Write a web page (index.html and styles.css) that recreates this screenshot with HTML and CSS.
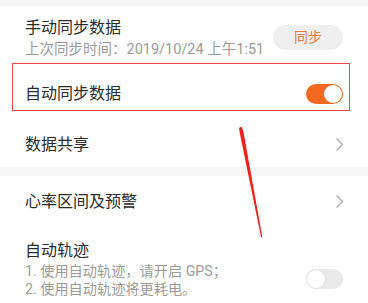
FILE: index.html
```html
<!DOCTYPE html>
<html lang="zh">
<head>
<meta charset="utf-8">
<link rel="stylesheet" href="styles.css">
</head>
<body>
<div class="page">
  <div class="band band-top"></div>
  <div class="row row-sync">
    <div class="text">
      <div class="title">手动同步数据</div>
      <div class="sub">上次同步时间：2019/10/24 上午1:51</div>
    </div>
    <div class="btn">同步</div>
  </div>
  <div class="row row-auto">
    <div class="title">自动同步数据</div>
    <div class="toggle on"><span class="knob"></span></div>
  </div>
  <div class="row row-share">
    <div class="title">数据共享</div>
    <svg class="chev" width="9" height="15" viewBox="0 0 9 15"><polyline points="1.5,1.5 7.5,7.5 1.5,13.5" fill="none" stroke="#b4b4b4" stroke-width="1.6"/></svg>
  </div>
  <div class="band band-gap"></div>
  <div class="row row-heart">
    <div class="title">心率区间及预警</div>
    <svg class="chev" width="9" height="15" viewBox="0 0 9 15"><polyline points="1.5,1.5 7.5,7.5 1.5,13.5" fill="none" stroke="#b4b4b4" stroke-width="1.6"/></svg>
  </div>
  <div class="row row-track">
    <div class="text">
      <div class="title">自动轨迹</div>
      <div class="line">1. 使用自动轨迹，请开启 GPS；</div>
      <div class="line">2. 使用自动轨迹将更耗电。</div>
    </div>
    <div class="toggle off"><span class="knob"></span></div>
  </div>

  <div class="mark-box"></div>
  <svg class="mark-arrow" width="368" height="303" viewBox="0 0 368 303">
    <polygon points="239,128 241.5,126.5 243.5,132 262.3,237 261,237 239.8,133" fill="#f0201a"/>
  </svg>
</div>
</body>
</html>
```

FILE: styles.css
```css
* { box-sizing: border-box; }
html, body { margin: 0; padding: 0; background: #ffffff; }
body {
  font-family: Roboto, "Noto Sans CJK SC", sans-serif;
  color: #2b2b2b;
}
.page {
  position: relative;
  width: 368px;
  height: 303px;
  overflow: hidden;
}
.band { background: #f5f5f5; }
.band-top { height: 6px; }
.band-gap { height: 9px; }

.row {
  display: flex;
  align-items: center;
  justify-content: space-between;
  padding: 0 25px;
}
.title {
  font-size: 16px;
  line-height: 22px;
  color: #2b2b2b;
}
.sub {
  font-size: 14.5px;
  line-height: 22px;
  color: #9a9a9a;
}
.line {
  font-size: 14.2px;
  line-height: 18px;
  color: #9a9a9a;
}

.row-sync {
  height: 58px;
  align-items: flex-start;
  padding-top: 11px;
}
.btn {
  margin-top: 8px;
  width: 70px;
  height: 25px;
  border-radius: 13px;
  background: #efefef;
  color: #ea7a3c;
  font-size: 14px;
  line-height: 25px;
  text-align: center;
}
.row-auto { height: 58px; padding-top: 2px; }
.row-share { height: 45px; }
.row-heart { height: 51px; }
.row-track {
  height: 76px;
  align-items: flex-start;
  padding-top: 13px;
}
.row-track .toggle { margin-top: 29px; }
.chev { margin-right: -1px; }

.toggle {
  position: relative;
  width: 37px;
  height: 20px;
  border-radius: 10px;
}
.toggle .knob {
  position: absolute;
  top: 1px;
  width: 18px;
  height: 18px;
  border-radius: 50%;
  background: #ffffff;
}
.toggle.on { background: #f3691f; }
.toggle.on .knob { right: 1px; }
.toggle.off { background: #e9e9e9; }
.toggle.off .knob { left: 1px; box-shadow: 0 0 0 1px #e2e2e2; }

.mark-box {
  position: absolute;
  left: 12px;
  top: 63px;
  width: 338px;
  height: 48px;
  border: 1.5px solid #ea4a48;
}
.mark-arrow {
  position: absolute;
  left: 0;
  top: 0;
}
```
